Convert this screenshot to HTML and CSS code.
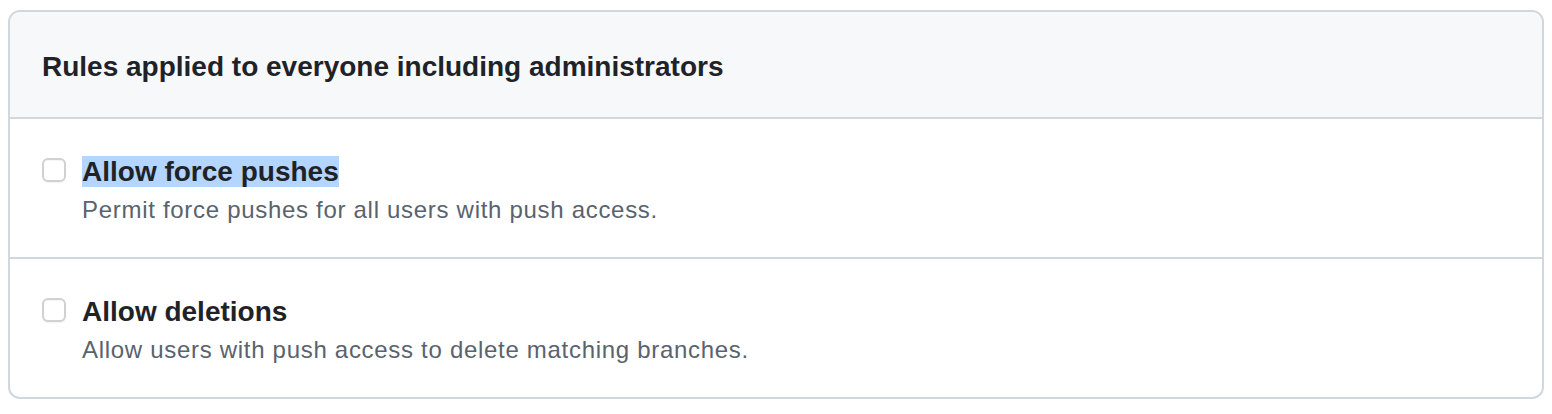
FILE: index.html
```html
<!DOCTYPE html>
<html lang="en">
<head>
<meta charset="utf-8">
<title>Branch protection rules</title>
<link rel="stylesheet" href="styles.css">
</head>
<body>
<div class="box">
  <div class="box-header">
    <h3 class="box-title">Rules applied to everyone including administrators</h3>
  </div>
  <div class="box-row">
    <input type="checkbox" class="check" id="force">
    <div class="rule">
      <label class="rule-title" for="force"><span class="selected">Allow force pushes</span></label>
      <p class="note">Permit force pushes for all users with push access.</p>
    </div>
  </div>
  <div class="box-row">
    <input type="checkbox" class="check" id="del">
    <div class="rule">
      <label class="rule-title" for="del">Allow deletions</label>
      <p class="note">Allow users with push access to delete matching branches.</p>
    </div>
  </div>
</div>
</body>
</html>
```

FILE: styles.css
```css
html, body {
  margin: 0;
  padding: 0;
  background: #ffffff;
}

body {
  padding: 10px 8px 0 8px;
  font-family: "Liberation Sans", Arial, sans-serif;
  color: #1f2328;
}

.box {
  border: 2px solid #d0d7de;
  border-radius: 12px;
  overflow: hidden;
  background: #ffffff;
}

.box-header {
  background: #f6f8fa;
  border-bottom: 2px solid #d0d7de;
  padding: 34px 32px 29px 32px;
}

.box-title {
  margin: 0;
  font-size: 28px;
  line-height: 42px;
  font-weight: 700;
  color: #1f2328;
}

.box-row {
  display: flex;
  align-items: flex-start;
  gap: 16px;
  padding: 33px 32px 29px 32px;
  border-top: 2px solid #d0d7de;
}

.box-header + .box-row {
  border-top: 0;
}

.check {
  appearance: none;
  -webkit-appearance: none;
  flex: none;
  width: 24px;
  height: 24px;
  margin: 6px 0 0 0;
  border: 2px solid #d1d1d1;
  border-radius: 6px;
  background: #ffffff;
  box-shadow: inset 0 1px 1px rgba(0,0,0,0.04), 0 1px 1px rgba(0,0,0,0.05);
}

.rule {
  display: flex;
  flex-direction: column;
}

.rule-title {
  font-size: 28px;
  line-height: 40px;
  font-weight: 700;
  color: #1f2328;
}

.selected {
  background: #b4d5fe;
}

.note {
  margin: 0;
  font-size: 24px;
  line-height: 36px;
  letter-spacing: 0.7px;
  color: #59636e;
}
```
